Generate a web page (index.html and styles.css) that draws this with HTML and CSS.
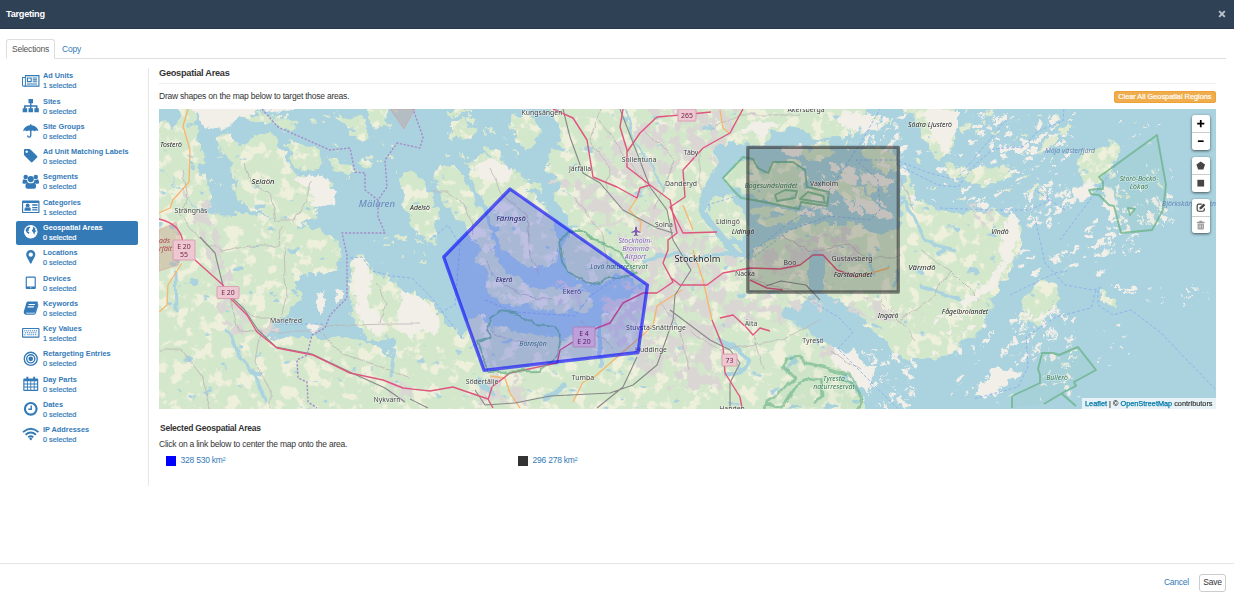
FILE: index.html
```html
<!DOCTYPE html>
<html lang="en">
<head>
<meta charset="utf-8">
<title>Targeting</title>
<link rel="stylesheet" href="styles.css">
</head>
<body>
<div class="dialog">
<header class="titlebar"><h1>Targeting</h1><svg class="close" viewBox="0 0 10 10"><path d="M2.200 2.200l5.600 5.600M7.800 2.200l-5.600 5.600"/></svg></header>
<nav class="tabs"><a class="tab active">Selections</a><a class="tab">Copy</a></nav>
<main class="main">
<aside class="side">
<a class="item"><svg viewBox="0 0 18 16"><path fill-rule="evenodd" d="M3 2h15v12H1.500Q0 14 0 12.500V4h3zM4 3.200V12.900h12.800V3.200zM1 5v7.500q1 1 2 0V5zM5 4.500h5v5H5zM6.200 5.700v2.600h2.600V5.700zM11 4.500h4.500v1.100H11zm0 2h4.500v1.100H11zm0 2h4.500v1.100H11zM5 10.700h10.500v1.100H5z"/></svg><span><b>Ad Units</b><i>1 selected</i></span></a>
<a class="item"><svg viewBox="0 0 18 16"><path d="M6.700 1h4.600v4.500H9.700v2h5.600q.7 0 .7.700v2.300h1.300v4.200h-4.600v-4.200h1.600V8.900H9.700v1.600h1.600v4.200H6.700v-4.200h1.600V8.900H3.700v1.600h1.600v4.200H.7v-4.200H2V8.200q0-.7.7-.7h5.600v-2H6.700z"/></svg><span><b>Sites</b><i>0 selected</i></span></a>
<a class="item"><svg viewBox="0 0 18 16"><path d="M9 1q.7 0 .7.800v.6Q15.500 3 17 8.500q-2-1.700-4 0-2-1.800-4 0-2-1.800-4 0-2-1.700-4 0Q2.500 3 8.300 2.400v-.6Q8.300 1 9 1z"/><path d="M9 8v4.800q0 1.700-1.600 1.700t-1.700-1.700" class="line"/></svg><span><b>Site Groups</b><i>0 selected</i></span></a>
<a class="item"><svg viewBox="0 0 18 16"><path fill-rule="evenodd" d="M2 2q0-1 1-1h4.500q.7 0 1.500.700l6.500 6.400q.8.800 0 1.600l-4.700 4.800q-.8.800-1.600 0L2.700 8Q2 7.200 2 6.500zM4.800 2.500a1.300 1.300 0 1 0 .01 0z"/></svg><span><b>Ad Unit Matching Labels</b><i>0 selected</i></span></a>
<a class="item"><svg viewBox="0 0 18 16"><circle cx="3.800" cy="3" r="2.300"/><circle cx="14.200" cy="3" r="2.300"/><circle cx="9" cy="5.200" r="3.200"/><path d="M.5 9.500Q.5 5.500 2 5.500q2 1 3.300.7Q5 8 6.200 8.800 4 9 3.500 10H2Q.5 10 .5 9.500zM17.500 9.500q0-4-1.500-4-2 1-3.300.7.300 1.800-.9 2.600 2.200.2 2.700 1.200H16q1.500 0 1.500-.5zM5.800 8.600q3.200 2 6.400 0 2.300.5 2.300 4.300 0 2.300-2.300 2.300H5.800q-2.300 0-2.300-2.300 0-3.800 2.300-4.300z"/></svg><span><b>Segments</b><i>0 selected</i></span></a>
<a class="item"><svg viewBox="0 0 18 16"><path fill-rule="evenodd" d="M1 1.500h16q1 0 1 1v11q0 1-1 1H1q-1 0-1-1v-11q0-1 1-1zM1.200 4v9.300h15.600V4zM10.500 5.500H16v1.300h-5.500zm0 2.600H16v1.300h-5.500zm0 2.500H16v1.200h-5.500z"/><circle cx="5.800" cy="6.700" r="2"/><path d="M2.500 12q0-3.500 1.700-3.500 1.600 1 3.200 0Q9.100 8.500 9.100 12z"/></svg><span><b>Categories</b><i>1 selected</i></span></a>
<a class="item selected"><svg viewBox="0 0 18 16"><circle cx="9" cy="8" r="7"/><path class="cut" d="M5 3.500l3-1 .5 1.200-1.700 1.500.5 1.500-1.800.5 2.200 1.500-.7 1.600L5 9 3.600 6.500zM11 2.500l3 2-.7 1.700 1.700 1-1.500 1-1 2.800-1.200-2.700-1.300-1.300 1-1.500.5-1z"/></svg><span><b>Geospatial Areas</b><i>0 selected</i></span></a>
<a class="item"><svg viewBox="0 0 18 16"><path fill-rule="evenodd" d="M9 1a4.700 4.700 0 0 1 4.700 4.700c0 1.800-1.500 3.800-3.900 8.700q-.8 1.300-1.600 0C5.800 9.500 4.300 7.500 4.300 5.700A4.700 4.700 0 0 1 9 1zm0 2.500a2.200 2.200 0 1 0 .01 0z"/></svg><span><b>Locations</b><i>0 selected</i></span></a>
<a class="item"><svg viewBox="0 0 18 16"><path fill-rule="evenodd" d="M5 1.500h8q1.200 0 1.200 1.200v10.600q0 1.200-1.200 1.200H5q-1.200 0-1.200-1.200V2.700Q3.800 1.500 5 1.500zM5 2.700v9.200h8V2.700zM8.500 12.700v1h1v-1z"/></svg><span><b>Devices</b><i>0 selected</i></span></a>
<a class="item"><svg viewBox="0 0 18 16"><path fill-rule="evenodd" d="M6 1.500h9.500q1.200.3.800 1.500L13.500 12q-.4 1.200-1.600 1.200H4q.2.700 1 .7h8l3.200-10q1 .7.600 1.800l-2.500 8q-.5 1.400-1.800 1.400H4q-2.500-.4-2.300-2.800L4.500 3Q5 1.500 6 1.500zM7 4l-.4 1.100h6.500l.4-1.100zM6 6.500l-.4 1.200h6.500l.4-1.200z"/></svg><span><b>Keywords</b><i>0 selected</i></span></a>
<a class="item"><svg viewBox="0 0 18 16"><path fill-rule="evenodd" d="M1 3h16q1 0 1 1v8q0 1-1 1H1q-1 0-1-1V4q0-1 1-1zM1.200 4.200v7.600h15.600V4.200z"/><path class="keys" d="M2.300 6h13.500M3 8h12.500M2.300 10h2M5.500 10h7M13.500 10h2.200"/></svg><span><b>Key Values</b><i>1 selected</i></span></a>
<a class="item"><svg viewBox="0 0 18 16"><g class="ring"><circle cx="9" cy="8" r="6.700"/><circle cx="9" cy="8" r="4.200"/></g><circle cx="9" cy="8" r="2.400"/></svg><span><b>Retargeting Entries</b><i>0 selected</i></span></a>
<a class="item"><svg viewBox="0 0 18 16"><path fill-rule="evenodd" d="M2.500 2.500h2V.7h2v1.800h5V.7h2v1.800h2q1.200 0 1.200 1.200v10.600q0 1.200-1.200 1.200h-13q-1.200 0-1.200-1.200V3.700q0-1.200 1.200-1.200zM2.500 5.500v2.200h2.600V5.500zm3.500 0v2.200h2.600V5.500zm3.500 0v2.200h2.600V5.500zm3.500 0v2.200h2.500V5.500zM2.500 8.600v2.300h2.600V8.600zm3.500 0v2.300h2.600V8.600zm3.500 0v2.300h2.600V8.600zm3.500 0v2.300h2.500V8.600zM2.500 11.800v2.400h2.600v-2.400zm3.500 0v2.400h2.600v-2.400zm3.500 0v2.400h2.600v-2.400zm3.500 0v2.400h2.500v-2.400z"/></svg><span><b>Day Parts</b><i>0 selected</i></span></a>
<a class="item"><svg viewBox="0 0 18 16"><circle class="thick" cx="9" cy="8" r="6"/><path class="line" d="M9.500 4.500v4H6.500"/></svg><span><b>Dates</b><i>0 selected</i></span></a>
<a class="item"><svg viewBox="0 0 18 16"><path class="wifi" d="M1 6.300q8-7 16 0M3.700 9q5.300-4.500 10.600 0M6.400 11.500q2.600-2 5.200 0"/><path d="M9 11.800l1.700 1.300L9 15l-1.700-1.900z"/></svg><span><b>IP Addresses</b><i>0 selected</i></span></a>
</aside>
<section class="content">
<h2>Geospatial Areas</h2>
<div class="intro"><p>Draw shapes on the map below to target those areas.</p><button class="clear">Clear All Geospatial Regions</button></div>
<div class="map">
<svg class="canvas" viewBox="159 109 1057 299.500" preserveAspectRatio="none">
<defs>
<filter id="land" filterUnits="userSpaceOnUse" x="150" y="100" width="1080" height="320" color-interpolation-filters="sRGB">
<feTurbulence type="fractalNoise" baseFrequency=".09" numOctaves="4" seed="4" result="n"/>
<feDisplacementMap in="SourceGraphic" in2="n" scale="15" xChannelSelector="R" yChannelSelector="G" result="s"/>
<feTurbulence type="fractalNoise" baseFrequency=".075" numOctaves="5" seed="12" result="f"/>
<feColorMatrix in="f" values="0 0 0 0 .933 0 0 0 0 .943 0 0 0 0 .863 9 0 0 0 -4.800" result="fc"/>
<feComposite in="fc" in2="s" operator="in" result="farm"/>
<feTurbulence type="fractalNoise" baseFrequency=".06 .09" numOctaves="3" seed="31" result="w"/>
<feColorMatrix in="w" values="0 0 0 0 .667 0 0 0 0 .827 0 0 0 0 .875 0 16 0 0 -11.500" result="wc"/>
<feComposite in="wc" in2="s" operator="in" result="lake"/>
<feMerge><feMergeNode in="s"/><feMergeNode in="farm"/><feMergeNode in="lake"/></feMerge>
</filter>
<filter id="rough" filterUnits="userSpaceOnUse" x="150" y="100" width="1080" height="320" color-interpolation-filters="sRGB">
<feTurbulence type="fractalNoise" baseFrequency=".12" numOctaves="4" seed="9" result="n"/>
<feDisplacementMap in="SourceGraphic" in2="n" scale="11" xChannelSelector="R" yChannelSelector="G"/>
</filter>
<filter id="town" filterUnits="userSpaceOnUse" x="150" y="100" width="1080" height="320" color-interpolation-filters="sRGB">
<feTurbulence type="fractalNoise" baseFrequency=".08" numOctaves="4" seed="21" result="n"/>
<feDisplacementMap in="SourceGraphic" in2="n" scale="20" xChannelSelector="R" yChannelSelector="G" result="s"/>
<feColorMatrix in="n" values="0 0 0 0 1 0 0 0 0 1 0 0 0 0 1 0 0 10 0 -4.500" result="m"/>
<feComposite in="s" in2="m" operator="in"/>
</filter>
<filter id="wobble" filterUnits="userSpaceOnUse" x="150" y="100" width="1080" height="320">
<feTurbulence type="fractalNoise" baseFrequency=".07" numOctaves="2" seed="6" result="n"/>
<feDisplacementMap in="SourceGraphic" in2="n" scale="7" xChannelSelector="R" yChannelSelector="G"/>
</filter>
</defs>
<rect class="water" x="159" y="109" width="1057" height="300"/>
<g class="forest" filter="url(#land)">
<path d="M150 125l16-4 8 6 6-9V100h13v20l7 20 3 20-10 3 8 14 10 13v12l-6 7-10-3-13-13-10-14-9-11-13-10z"/>
<path d="M150 166l16 5 14 22 15 15 11 6 24-1 20 0 15 5 20 4 35 8 18 12 2 14-2 14-19 4-20 3-6 10 10 10-14 17-23 13 0 10 40 1 20 0 20-3 13 3 20 12 10 8 6-15 23-9 20 7 35 30 15 22 0 40H150z"/>
<path d="M352 260l11-3 10 15 20 6 10 14 27 10 13 18 24 20 15 30-10 30h-60l-20-60-25 0-15-22-3-20z"/>
<path d="M215 137l15-4 10 14 10-7 10-8 13 5 10 13 10 20 7 7 23 0 12 15-25 25-13 8-20-5-20-8-17-12-5-27-10-16zM287 140l30 10 6 13-16 10-14-10zM327 161l15-1 13 13-10 2zM332 113l28 3 10 20-8 4-24-18zM370 105h17l-1 18-10 4-8-10zM357 160l8-3 7 8-8 3zM244 112l22 0 8 7-8 5-16-3zM274 121l11-8 13 10-6 10z"/>
<path d="M400 177l10-7 10 7 13 20 4 13-2 33-8 4-10-14-7-8-7-25zM437 167l16-4 10 14 10 20 10 16 10 30-3 17-13-13-10-20-17-17-10-13-7-17zM467 160l20-3 16 3 10 13 25 10 5 9-20-5 14 10 13 16 7 20 0 27-20 10-17-10-20-10-3-17-10-23-14-23zM510 117l23-4 10 20-13 20-13-13zM453 120l10 0 14 10-6 9-18-3zM448 109h22l-5 5h-14zM480 146l15 3 10 10-12 0z"/>
<path d="M477 253l15-3 11 17 17 13 20 10 20-3 17 0 16 10-3 13-20 3-27-3-26-3-20-7-14-13 7-14-10-10zM560 250l10-20 27 3 20 24 23 13-13 5-27 8-23-3-14-17z"/>
<path d="M553 100h190l-8 32-15 18-13 37 0 20 30 43 15 10 35 10 26 15-10 15-16 13 47 40 10 12-4 12 20 18 5 25H482l0-38-17-42-2-17 14-9 16 13 34 7 33 5 37 0 3-22 23-17 20-12-16-11-20-26-38-28-16-24 7-17-14-17 14-27z"/>
<path d="M735 100h135l-10 24-14 12-30 4-17-12-25 2-12 18-20-4-14-7z"/>
<path d="M747 257l33-24 37-10h40l20 12 23-10 5-55 12 27 23 13 20 5 30-5 27 10 6 27-13 23-13 20-17 40-30 23-15 7-30 0-35-33-13-20-40-17-20 8-47-11z"/>
<path d="M723 178l20-21 10 2 5 9 10 5 5-11h20l12 8 2 17 22 5-2 14-27 2-40-9-18-3-8-8zM710 200l16-8 11 11 13 24-7 16-20-10-13-10zM750 208l25-2 30 8-10 8-35 3zM805 148l20-6 10 10-15 10-16-4zM835 178l25 10 20 20-5 5-25-13-18-12zM860 145l30 5 8 20-15 2-20-15z"/>
<path d="M1077 160l10-10 25-7 8 6-17 32-10 6-12-7zM1023 296l20-15 15 4-2 20-16 20-18-5zM1100 290l14 10 2 7-14-6zM905 105h50l-2 40-13 18-20-30zM945 165l25 3 40 1 4 8-30 7-30-5z"/>
</g>
<g class="bare" filter="url(#rough)">
<path d="M190 105h110l-18 7-25-2-22 10-10 10-20-5-7-10zM300 177l20-2 18 17-4 11-20 3-4-17-14-8zM352 260l11-3 10 20-5 24 15 22-3 15-22-18zM403 292l25 10 13 18-5 14-15-3-10 10-15-17zM475 165l15-7 15 5 8 12-14 8-17-5zM320 293l4-3 2 14-7 9-3-8zM336 290l7-2 0 10-8 6zM308 323l17 3-10 7-8-3z"/>
<path d="M833 346l20 3 18 25-3 20-18-15-18-20zM860 115l20 0-4 13-14 6zM740 130l18-10 20 3-12 13zM780 148l20-4 5 8-18 5zM835 120l25-8 4 10-12 10zM860 172l35 7-7 10-25-6zM855 195l40 20-7 6-33-16zM925 109h33v20l-12 26-10-10-13-25zM1080 188l10-10 5 10-10 16-9-7zM1105 185l10 10 2 20-6 5-8-18z"/>
<path d="M1010 212l10 8-5 25-8 12-7-12zM997 244l20 10-12 14zM985 398l-10-5 20-25 28 5-25 16zM1000 265l9-4-18 30-28 17-5-6 25-14z"/>
</g>
<g id="islets" class="bare" filter="url(#rough)"></g>
<g class="urban" filter="url(#town)">
<path d="M580 160l20 0 20 25 30 10 30-30 25-10 30-30 20-10-20-10-90 0-20 40-20-10zM550 180l25-5 60 25 35 10 20 25 50 15-5 30 0 15 80 5-30 20-60 5-30 20-10 40-30 0-50-60 0-30 25-30-10-30-30-15zM600 300l50-20 70 60 0 50-40 0-55-60zM745 260l40-20 60-10 20 30-30 10-50 5-40 0zM480 375l40 0 10 30h-55zM193 210l15-5 8 30 12 40 10 50-15 5-12-70zM225 305l18-5 5 30-15 5zM180 170l15 30-10 0zM260 325l20 0-5 15h-18zM390 380l25 5-5 15-20 0zM815 345l15 0 5 10-12 10zM560 280l20 8 0 15-20 0zM700 150l25-15 5 20-20 20zM800 300l90 0 15 20-60-5zM970 205l20 5-5 20z"/>
</g>
<g class="channel" filter="url(#wobble)"><path d="M600 320l0 45M643 262l15-6 20-2 18 5 30-6 25 3" stroke-width="4"/><path d="M704 192l-2 18 14 20 20 25" stroke-width="7"/><path d="M720 150l8 15-12 15-8 15" stroke-width="12"/><path d="M787 313l25 8 34 27" stroke-width="11"/><path d="M626 109l6 30 20 30 12 20" stroke-width="2"/><path d="M175 272l1 40M226 331l7 8 8 20 15 20 10 22M390 375l4-20" stroke-width="3"/><path d="M720 340l20 12 10 8-5 10-18 6M478 380l15 15M545 398l20-12" stroke-width="5"/><path d="M817 255l-2 25M870 255l3 20M898 270l-5 15M905 200l20 40 30 10M920 285l40 15" stroke-width="3"/><path d="M813 290l15 12 25 18 15 25" stroke-width="7"/><path d="M817 258l0 28" stroke-width="16"/></g>
<path class="military" d="M159 230l17-8 6 25-4 18-19 6zM390 109h25l-11 20z"/>
<g class="minor" filter="url(#wobble)"><path d="M183 170l5 28-8 16 18 24 25 14 25-6 30 0 5-20M245 162l5 20 20 10 5 28 20 0 12-20 3-20M284 248l2 50-5 20-25 0-15-10M159 350l22 0 20 25 10 33M230 300l8 30 22 1-5 30 15 30 0 17M270 332l50 0 20 20 40 15 30 10M320 326l70-2 30 0M375 283l10 20-5 20M430 190l15 0 20 15 10 30M490 170l12 25 25 20 3 40 10 20M487 260l10 20 25 15 30 5M490 330l20 10 30 5M580 320l35 30M600 109l-10 30 20 30-5 25M645 130l30 30-20 50M710 130l30-15 60 0M700 150l0 40M690 330l30 20 60-10 40-20M753 335l10 35M900 180l15 30M920 250l30 20 30 30M830 350l30 20M820 295l-10 5-20-10-40-10M780 235l30 15 40-5 20 15 30-5M950 270l-20 30-30 20M880 300l20 20 15 20M575 200l25 30 10 40M600 120l50 70M660 300l20 30 10 40"/></g>
<g class="trunk"><path d="M188 109l-5 17 7 24-1 32-16 18-3 8-11 5M182 263l-14 22-1 20-8 7M637 198l-8 12 12 12-1 10M693 250l10 30 9 40M573 402l10-20 10-4 60-52 4-20 25-16M490 376l15 2 5 15 10 15M720 110l3 18 6 5M683 205l10 25M857 277l32-9"/></g>
<g class="rail"><path d="M200 237l15 16 9 37 20 19 14 21 18 17 36 7 40 19 33 15 20 14M410 399l18 9M563 109l7 28 13 36 17 10 23 27 34 18 16 5M620 109l17 44 13 34 17 23 6 30 18 30-16 25-2 25-16 45-24 20-23 8-60 3-35 7-30 2-10-15M637 357l-14 30-26 21M670 310l40 30 20 10 10 13-10 20v25M820 300l-14-15-25-4-15 5"/></g>
<g class="motorway"><path d="M159 219q22 5 24 24M195 260l28 25 7 13 17 17 10 17 20 16 36 7 37 18 33 7 20 8 27 3 23-4 35 12 5 9M488 400l4-13 18-14 47-10 3-13 13-8 24-14 13-5 13-20 20-10h14l16-11-10-19 5-13 0-10 9-7-7-33-20-15-23-18 0-17-7-23 3-18M553 109l20 9 14 22 6 37 24 10 20 11 3-10 10-3M627 152l13-19 17-16 24-2 30-3M743 109l-13 24-27 15-20 22 2 27-15 10 13 26 34-1M670 277l10 8 27 0 16-12 27-5 30 1 20-4 13-10h10l14 15 20 7M750 280l17 8 16 2M712 320l11 27 2 26 15 24 2 11M720 318l13-3 14 13 6 7 7-7 10 3"/></g>
<g class="ferry"><path d="M350 258l12-1 10 14 20 5 20 2 20 20 30 40M430 240l18-15 12 20-5 60-20 10M485 300l30 12 60 4 15-20 30-20M280 324l45 0M707 205l30-9M740 262l50-40 30-18 40-60 20-35M750 260l40-30 40-14 40 4 10-10-2-30-22-20 40 0 30 12 30 8 50-60M898 165l40 20 20 2 15-20 20-18 30-2 15-16 25-10 1-14M940 208l50 2 40 0 20-10-10-15M1035 218l10 45 20 22 28 5 10-3M1060 240l30-40 30-40M1065 210l-30-20M1010 295l45-22 12-2M813 302l25 15 15 15-15 17 20 20 30 30 10 10M1098 290l0 15 15 10 18-5 30 23 54 56M1096 290l-5 18-35 9-30 20 2 30-10 20-45 12"/></g>
<g class="purple"><path d="M262 109l16 18 52 23 20-2 5 24 10 1 0 17 13 10 9-13-2-27 12-17 23 5 3-11-10-28M378 200l0 17 7 16-43 0 5 22 0 43-17 17-5 13-13 7-5 20-10 5 1 18 9 4 1 20 9 6"/></g>
<g class="reserve">
<path d="M723 178l20-21 10 2 5 9 10 5 5-11h20l12 8 2 17 22 5-2 14-26-4-2 7-40-8-18-3-8-8zM775 195l10-5 12 1-2 7-18 3zM800 199l8-7 15 4 2 7z"/>
<path d="M1157 135l9 50-3 25-11 20-31 3-7-27-5-1-10-10-8-1-2-4 8-1 6 0 0-7-4-5zM1128 208l2 7 5-6z"/>
<path d="M1012 408v-12l28-13 0-8-2-6 4-16 11 0 6 2 19-8 18 23-22 12 2 4-12 6-20 12M1062 394l14 12"/>
<g class="strong" filter="url(#wobble)"><path d="M765 408l2-7 28-22-13-13 4-7 14-4 5 9 20 4 10 4 15 1 12 25-5 10M765 403l16 5 15-23 15-7 10 2 2 15-10 10M840 378l18 10"/></g>
<g filter="url(#wobble)"><path d="M562 262l-3-20 10-12 6 2 10 0 7 8 11 3 15 8 8 13 11 8-18 6-10 0-10 6-15-3-14-7zM488 330l2-12 10-7 20 3 5 5 10 5 20 2 5 9-3 20-3 5-15 11-50 1-5-12-7-18 15-5-5-7z"/></g></g>
<g class="shield"><rect x="173" y="240" width="22" height="20" rx="1"/><rect x="217" y="286.500" width="22" height="12" rx="1"/><rect x="573" y="327" width="22" height="20" rx="1"/><rect x="678" y="109" width="18" height="12" rx="1"/><rect x="722" y="354" width="15" height="12" rx="1"/></g>
<g class="shield-text"><text x="184" y="249">E 20</text><text x="184" y="257">55</text><text x="228" y="295">E 20</text><text x="584" y="335.500">E 4</text><text x="584" y="343.500">E 20</text><text x="687" y="117.500">265</text><text x="729.500" y="362.500">73</text></g>
<g class="town"><text x="191" y="212.500">Strängnäs</text><text x="286" y="323">Mariefred</text><text x="387" y="401.500">Nykvarn</text><text x="482" y="384">Södertälje</text><text x="583" y="379.500">Tumba</text><text x="542" y="114.500">Kungsängen</text><text x="580" y="170.500">Järfälla</text><text x="639" y="162">Sollentuna</text><text x="691" y="155">Täby</text><text x="681" y="186">Danderyd</text><text x="664" y="226.500">Solna</text><text x="572" y="294">Ekerö</text><text x="656" y="329.500">Stuvsta-Snättringe</text><text x="651" y="352">Huddinge</text><text x="728" y="224">Lidingö</text><text x="745" y="275.500">Nacka</text><text x="790" y="265">Boo</text><text x="852" y="261">Gustavsberg</text><text x="824" y="186">Vaxholm</text><text x="806" y="111.500">Åkersberga</text><text x="751" y="326">Älta</text><text x="813" y="343">Tyresö</text><text x="732" y="410.500">Handen</text></g>
<text class="city" x="697.500" y="262">Stockholm</text>
<g class="island"><text x="171" y="147">Tosterö</text><text class="big" x="263" y="183.500">Selaön</text><text x="420" y="209.500">Adelsö</text><text class="big" x="511" y="220.500">Färingsö</text><text x="504" y="281.500">Ekerö</text><text x="743" y="233.500">Lidingö</text><text x="853" y="276.500">Farstalandet</text><text class="big" x="922" y="270">Värmdö</text><text x="888" y="318">Ingarö</text><text x="930" y="126.500">Södra Ljusterö</text><text x="1000" y="233.500">Vindö</text><text x="965" y="314">Fågelbrolandet</text></g>
<g class="nature"><text x="771" y="187.500">Bogesundslandet</text><text x="619" y="268.500">Lovö naturreservat</text><text x="533" y="345.500">Bornsjön</text><text x="834" y="381">Tyresta</text><text x="834" y="389">naturreservat</text><text x="1139" y="181">Storö-Bockö-</text><text x="1139" y="189">Lökaö</text><text x="1057" y="380">Bullerö</text></g>
<g class="sea"><text class="lake" x="377" y="207">Mälaren</text><text x="1070" y="153">Möja västerfjärd</text><text x="1189" y="206">Björkskärsfjärden</text></g>
<g class="airport"><path d="M636 226.500l1 1v2.500l3.500 2v1l-3.500-.8v2l1.200 1v.7l-2.200-.5-2.200.5v-.7l1.200-1v-2l-3.500.8v-1l3.500-2v-2.500z"/><text x="635.500" y="242.500">Stockholm-</text><text x="635.500" y="250.500">Bromma</text><text x="635.500" y="258.500">Airport</text></g>
<g class="base-text"><text x="159" y="243">ads</text><text x="159" y="251">rfält</text></g>
<path class="area-a" d="M510 189l137.500 96-9.500 67.500L484 370.300 443.700 257z"/>
<rect class="area-b" x="747.800" y="147.300" width="150.500" height="144.700"/>
</svg>
<div class="controls">
<div class="bar"><svg viewBox="0 0 17 17"><path class="sign" d="M8.500 5v7M5 8.500h7"/></svg><svg viewBox="0 0 17 17"><path class="sign" d="M5.500 8.500h6"/></svg></div>
<div class="bar"><svg viewBox="0 0 17 17"><path d="M8.500 4.300l4.200 3-1.600 4.900H5.900L4.300 7.300z"/></svg><svg viewBox="0 0 17 17"><path d="M5 5h7v7H5z"/></svg></div>
<div class="bar"><svg viewBox="0 0 17 17"><path class="edit" d="M9.500 5H6.400Q5 5 5 6.400v4.200Q5 12 6.400 12h4.200q1.400 0 1.400-1.400V9"/><path d="M7.500 8.200l3.700-3.800 1.800 1.700-3.700 3.800-2 .3z"/></svg><svg class="off" viewBox="0 0 17 17"><path fill-rule="evenodd" d="M7 4h3v1h2.500v1.200h-8V5H7zM5.200 6.800h6.600V12q0 1-1 1H6.200q-1 0-1-1zM6.500 7.700v4.200h.5V7.700zm1.700 0v4.200h.5V7.700zm1.700 0v4.200h.5V7.700z"/></svg></div>
</div>
<div class="credit"><b>Leaflet</b> | © <b>OpenStreetMap</b> contributors</div>
</div>
<h3>Selected Geospatial Areas</h3>
<p class="hint">Click on a link below to center the map onto the area.</p>
<div class="areas"><a><span class="swatch blue"></span>328 530 km²</a><a><span class="swatch dark"></span>296 278 km²</a></div>
</section>
</main>
<footer class="foot"><a>Cancel</a><button class="save">Save</button></footer>
</div>
<script src="islets.js"></script>
</body>
</html>
```
FILE: islets.js
```js
// Small skerries, spread over archipelago zones: x, y, width, height, count, angle, largest size
const zones = [
  [965, 112, 110, 40, 85, -25, 7],
  [955, 150, 130, 60, 80, -25, 5],
  [1025, 185, 45, 40, 50, -50, 5],
  [1108, 165, 65, 60, 75, 55, 4],
  [1085, 220, 55, 35, 45, -25, 5],
  [1020, 245, 90, 30, 28, -20, 5],
  [1112, 285, 25, 10, 16, 0, 5],
  [1145, 285, 65, 22, 18, 0, 1.5],
  [1010, 310, 65, 50, 65, -45, 4],
  [950, 345, 70, 60, 25, -60, 4],
  [1040, 355, 40, 45, 30, -50, 3],
  [1090, 320, 40, 45, 12, -30, 2],
  [862, 350, 60, 58, 75, 55, 4],
  [845, 112, 60, 40, 45, -50, 6],
  [800, 165, 90, 50, 75, 25, 7],
  [900, 150, 65, 55, 30, 30, 5],
  [1120, 112, 40, 35, 14, -30, 3],
  [440, 112, 80, 50, 30, 35, 4],
  [200, 150, 40, 40, 14, 30, 3],
  [300, 112, 100, 60, 26, 20, 4],
  [355, 235, 70, 30, 20, 10, 4],
  [930, 310, 65, 45, 25, -30, 6]
];
let state = 71;
const rand = () => (state = (state * 16807) % 2147483647) / 2147483647;
const layer = document.getElementById("islets");
for (const [x, y, w, h, count, angle, size] of zones) {
  for (let i = 0; i < count; i++) {
    const e = document.createElementNS("http://www.w3.org/2000/svg", "ellipse");
    const r = 0.6 + rand() * rand() * size;
    const cx = x + rand() * w, cy = y + rand() * h;
    e.setAttribute("cx", cx);
    e.setAttribute("cy", cy);
    e.setAttribute("rx", r * 1.3);
    e.setAttribute("ry", r * 0.6);
    e.setAttribute("transform", `rotate(${angle + rand() * 24 - 12} ${cx} ${cy})`);
    if (cx < 560 || (cy < 200 && rand() < 0.25)) e.setAttribute("class", "green");
    layer.append(e);
  }
}
```
FILE: styles.css
```css
* { box-sizing: border-box; }
body { margin: 0; font: 8.500px/11px "Liberation Sans", Arial, sans-serif; letter-spacing: -.225px; color: #333; background: #fff; }
h1, h2, h3, p { margin: 0; }
a { color: #337ab7; }
button { font: inherit; letter-spacing: inherit; margin: 0; }
.dialog { height: 596px; display: flex; flex-direction: column; }
.titlebar { height: 29px; flex: none; background: #2f4154; border-bottom: 1px solid #26384a; display: flex; justify-content: space-between; align-items: center; padding: 0 7px 1px 6px; }
.titlebar h1 { font-size: 9.200px; line-height: 12px; color: #fff; letter-spacing: -.270px; }
.close { width: 10px; height: 10px; }
.close path { stroke: #bcc4cb; stroke-width: 1.900; }
.tabs { display: flex; flex: none; margin: 10px 8px 0 6px; height: 20px; border-bottom: 1px solid #ddd; }
.tab { height: 20px; padding: 4px 7px 0 6px; border: 1px solid transparent; }
.tab.active { width: 49px; padding: 4px 0 0 5px; color: #555; background: #fff; border-color: #ddd #ddd #fff; border-radius: 3px 3px 0 0; }
.main { flex: 1; display: flex; padding: 9px 18px 0 16px; }
.side { width: 133px; height: 418px; padding: 1.400px 10px 0 0; border-right: 1px solid #e7e7e7; flex: none; }
.item { display: flex; align-items: center; height: 24px; margin-bottom: 1.270px; padding-left: 6px; border-radius: 2px; font-size: 7.330px; line-height: 10px; letter-spacing: 0; }
.item svg { width: 17.500px; height: 15.600px; margin: -2px 3.500px 0 0; fill: #337ab7; flex: none; }
.item span { display: block; white-space: nowrap; }
.item b, .item i { display: block; font-style: normal; }
.item i { -webkit-text-stroke: .2px currentColor; }
.item .line, .item .keys, .item .ring, .item .thick, .item .wifi { fill: none; stroke: #337ab7; stroke-width: 1.400; }
.item .thick { stroke-width: 2.200; }
.item .wifi { stroke-width: 1.900; }
.item .keys { stroke-width: 1; stroke-dasharray: 1.200 .8; }
.item.selected { background: #337ab7; color: #fff; }
.item.selected svg { fill: #fff; }
.item.selected .cut { fill: #337ab7; }
.content { flex: 1; padding-left: 10px; min-width: 0; }
.content h2 { font-size: 9.200px; line-height: 11px; height: 16px; border-bottom: 1px solid #eee; letter-spacing: -.260px; }
.intro { display: flex; justify-content: space-between; height: 25px; padding-top: 7px; }
.clear { height: 12px; padding: 0 3.500px; background: #f0ad4e; color: #fff; border: 1px solid #eea236; border-radius: 2px; font-size: 7.330px; line-height: 10px; letter-spacing: 0; -webkit-text-stroke: .2px #fff; }
.map { position: relative; height: 299.500px; overflow: hidden; }
.canvas { display: block; width: 100%; height: 100%; }
.water { fill: #aad3df; }
.forest { fill: #d3e7cb; }
.bare { fill: #f2efe9; }
.green { fill: #dfead0; }
.urban { fill: #d9d6d4; }
.channel { fill: none; stroke: #aad3df; stroke-linecap: round; stroke-linejoin: round; }
.military { fill: #d07d6a; fill-opacity: .25; stroke: #d99; stroke-width: .5; }
.minor { fill: none; stroke: #bbb5b5; stroke-width: .8; }
.trunk { fill: none; stroke: #f7b56d; stroke-width: 1.300; stroke-linejoin: round; }
.rail { fill: none; stroke: #888; stroke-width: 1.100; stroke-linejoin: round; }
.motorway { fill: none; stroke: #e0557d; stroke-width: 1.400; stroke-linejoin: round; }
.ferry { fill: none; stroke: #88a9ef; stroke-width: .8; stroke-dasharray: 3 2; stroke-linejoin: round; }
.purple { fill: none; stroke: #a58bc9; stroke-width: 1.400; stroke-dasharray: 2.200 1.600; stroke-linejoin: round; }
.reserve { fill: #79bd8c; fill-opacity: .06; stroke: #68b286; stroke-opacity: .75; stroke-width: 1.900; stroke-linejoin: round; }
.strong { stroke-width: 2.800; stroke-opacity: .6; }
.shield { fill: #edc7d1; stroke: #d894a8; stroke-width: .8; }
.canvas text { font-family: "Noto Sans", sans-serif; font-size: 6.900px; letter-spacing: 0; text-anchor: middle; paint-order: stroke; stroke: #fff; stroke-opacity: .55; stroke-width: 1.200px; }
.canvas .shield-text text { fill: #712445; stroke: none; }
.canvas .town text { fill: #444; }
.canvas .city { fill: #222; font-size: 9.300px; }
.island text { fill: #222; font-style: italic; }
.canvas .island .big { font-size: 7.700px; }
.nature text { fill: #33764c; font-style: italic; }
.canvas .sea text { fill: #6587ba; font-style: italic; stroke: none; }
.canvas .sea .lake { font-size: 9.500px; letter-spacing: .2px; }
.airport { fill: #7d5bb0; }
.airport text { font-style: italic; }
.canvas .base-text text { fill: #ad4450; font-style: italic; text-anchor: start; stroke: none; }
.area-a { fill: #00f; fill-opacity: .2; stroke: #00f; stroke-opacity: .6; stroke-width: 3.300; stroke-linejoin: round; }
.area-b { fill: #222; fill-opacity: .22; stroke: #333; stroke-opacity: .6; stroke-width: 3.300; stroke-linejoin: round; }
.controls { position: absolute; top: 6px; right: 6.500px; display: flex; flex-direction: column; gap: 7.200px; }
.bar { width: 17.500px; height: 34.700px; background: #fff; border-radius: 2.500px; box-shadow: 0 1px 3px rgba(0, 0, 0, .6); display: flex; flex-direction: column; }
.bar svg { width: 17.500px; height: 17.350px; fill: #464646; }
.bar svg + svg { border-top: 1px solid #ccc; }
.bar .sign { stroke: #000; stroke-width: 1.700; fill: none; }
.bar .edit { stroke: #464646; stroke-width: 1.200; fill: none; }
.bar .off { fill: #999; }
.credit { position: absolute; right: 0; bottom: 0; height: 11px; line-height: 11px; padding: 0 3.500px; background: rgba(255, 255, 255, .7); font-size: 7.330px; letter-spacing: 0; white-space: nowrap; -webkit-text-stroke: .15px currentColor; }
.credit b { font-weight: 400; color: #0078a8; -webkit-text-stroke: .25px #0078a8; }
.content h3 { margin: 14.500px 0 0 1px; font-size: 8.500px; line-height: 11px; }
.hint { margin-top: 4.500px; }
.areas { display: flex; margin-top: 5px; padding-left: 7px; }
.areas a { width: 352px; display: flex; align-items: center; gap: 4.500px; height: 12px; }
.swatch { width: 10px; height: 10px; }
.blue { background: #00f; }
.dark { background: #333; }
.foot { height: 33px; flex: none; border-top: 1px solid #e5e5e5; display: flex; justify-content: flex-end; align-items: center; gap: 10px; padding: 5px 8px 0 0; }
.save { height: 18px; width: 27px; padding: 0; border: 1px solid #ccc; border-radius: 3px; background: #fff; color: #333; }
```
